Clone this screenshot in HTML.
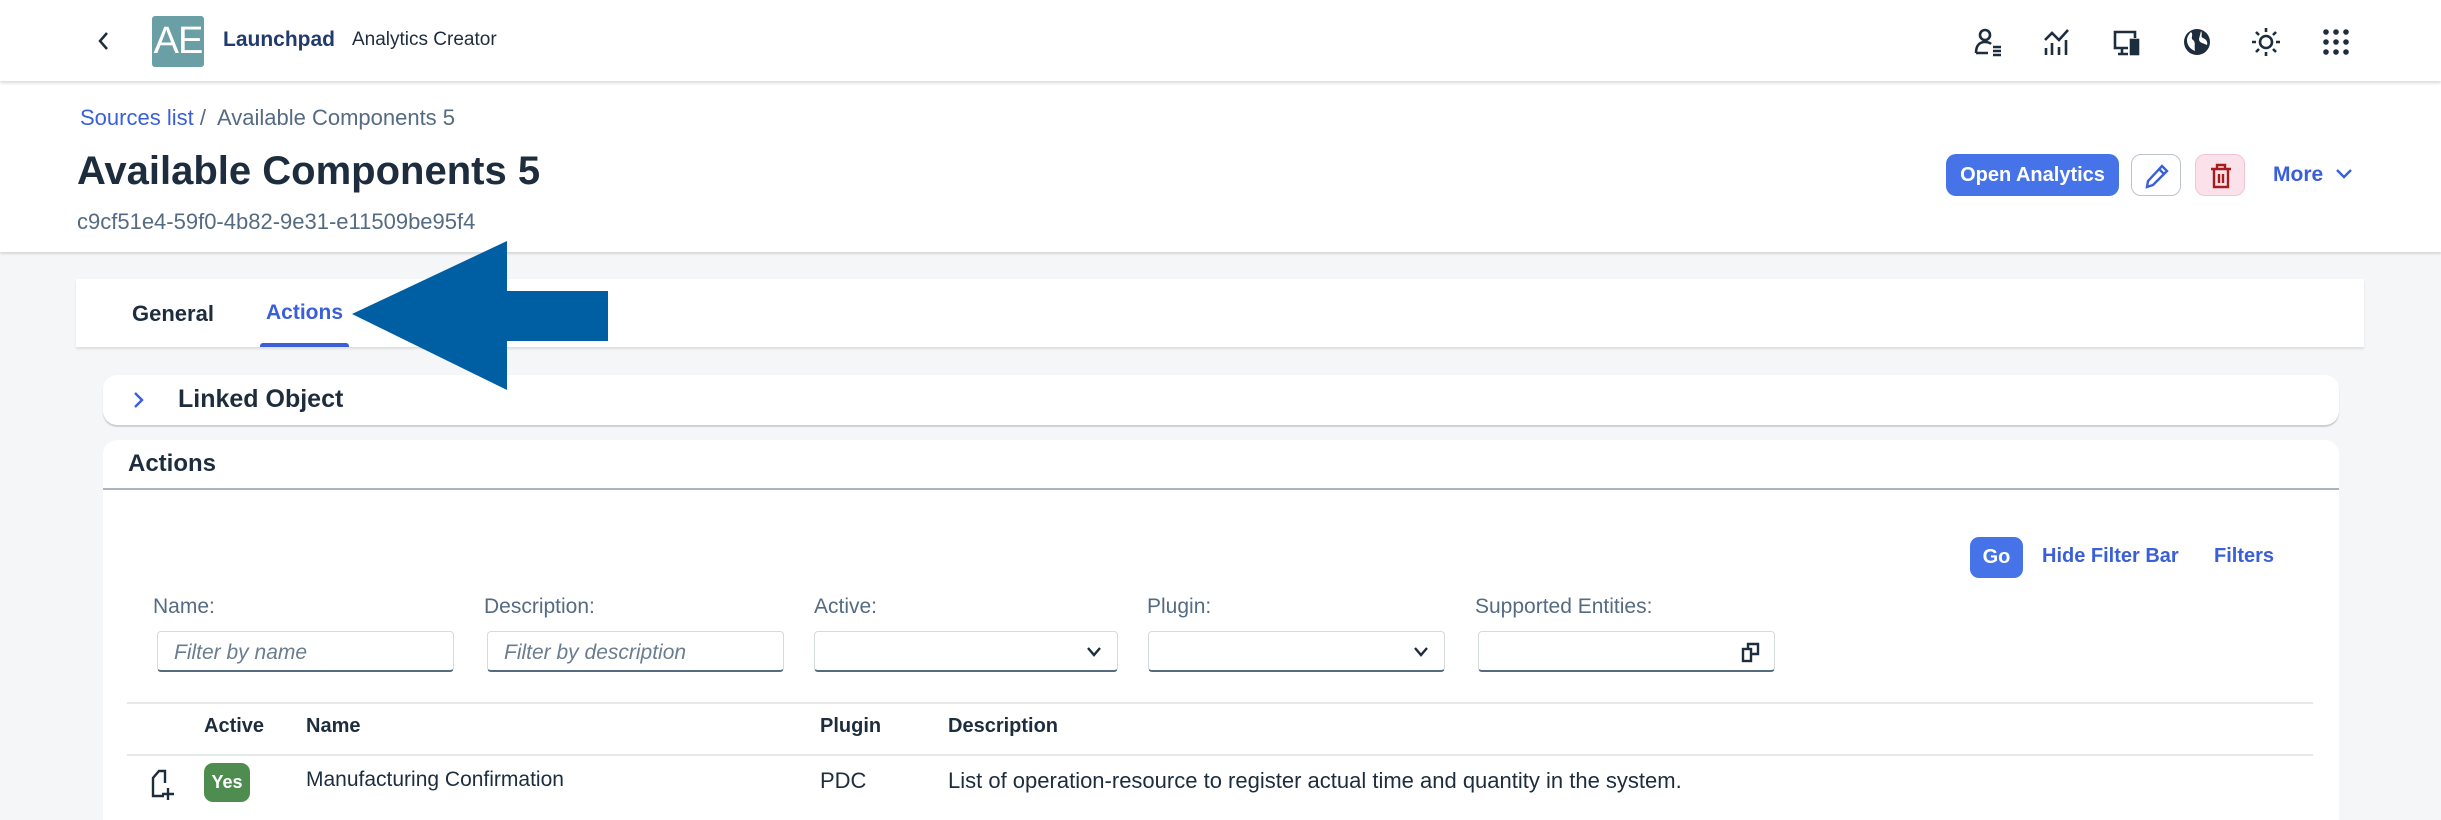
<!DOCTYPE html>
<html><head><meta charset="utf-8"><style>
*{margin:0;padding:0;box-sizing:border-box}
body{width:2441px;height:802px;overflow:hidden;background:#f5f6f7;font-family:"Liberation Sans",sans-serif;color:#1d2d3e;position:relative}
.a{position:absolute;white-space:nowrap}
.hdr{left:0;top:0;width:2441px;height:81px;background:#fff;box-shadow:0 2px 3px rgba(0,0,0,.15);z-index:2}
.ph{left:0;top:81px;width:2441px;height:171px;background:#fff;box-shadow:0 2px 2px rgba(0,0,0,.12);z-index:1}
.lbl{font-size:21px;color:#556b82;top:595px}
.inp{top:631px;height:41px;border:1px solid #d5dadd;border-bottom:2px solid #556b82;border-radius:4px;background:#fff}
.ph2{font-size:21px;font-style:italic;color:#6a7d90;top:9px;left:16px}
.th{top:715px;font-size:20px;font-weight:bold;color:#1d2d3e}
.td{top:768px;font-size:22px;color:#1d2d3e}
.lnk{color:#3a5fd8}
</style></head><body>
<div class="a hdr">
  <svg class="a" style="left:96px;top:30px" width="16" height="22" viewBox="0 0 16 22"><path d="M11 3 L4 11 L11 19" fill="none" stroke="#1d2d3e" stroke-width="2.5"/></svg>
  <div class="a" style="left:152px;top:16px;width:52px;height:51px;background:#6a9fa5;border-radius:3px;color:#fff;font-size:38px;text-align:center;line-height:51px;letter-spacing:-1px">AE</div>
  <div class="a" style="left:223px;top:28px;font-size:21px;font-weight:bold;color:#223a6e">Launchpad</div>
  <div class="a" style="left:352px;top:29px;font-size:19px;color:#1d2d3e">Analytics Creator</div>
  <svg class="a" style="left:1972px;top:26px" width="32" height="32" viewBox="0 0 32 32" fill="none" stroke="#1d2d3e" stroke-width="2.6"><circle cx="13" cy="9" r="5"/><path d="M4 27 C4 19 8 16 13 16 C16 16 18 17 19 18 M4 27 H16"/><path d="M21 21h8M21 25h8M21 29h8" stroke-width="2.4"/></svg>
  <svg class="a" style="left:2041px;top:26px" width="32" height="32" viewBox="0 0 32 32" fill="none" stroke="#1d2d3e" stroke-width="2.6"><path d="M4 14 L11 7 L18 14 L27 4"/><path d="M5 22v7M11 17v12M18 21v8M25 14v15"/></svg>
  <svg class="a" style="left:2111px;top:26px" width="32" height="32" viewBox="0 0 32 32" fill="none" stroke="#1d2d3e" stroke-width="2.6"><path d="M17 22H4V6h20v6"/><path d="M11 22v5M7 28h10"/><rect x="20" y="14" width="7" height="14" fill="#1d2d3e"/></svg>
  <svg class="a" style="left:2181px;top:26px" width="32" height="32" viewBox="0 0 32 32"><circle cx="16" cy="16" r="13" fill="#1d2d3e"/><path d="M10 6 C13 9 9 12 12 14 C15 16 13 20 14 25 C9 23 6 19 6 14 C6 11 8 8 10 6Z M20 5 C22 8 19 11 22 12 C25 13 27 16 26 19 C22 17 18 17 18 13 Z" fill="#fff"/></svg>
  <svg class="a" style="left:2250px;top:26px" width="32" height="32" viewBox="0 0 32 32" fill="none" stroke="#1d2d3e" stroke-width="2.6"><circle cx="16" cy="16" r="6"/><path d="M16 2v4M16 26v4M2 16h4M26 16h4M6 6l3 3M23 23l3 3M6 26l3-3M23 9l3-3"/></svg>
  <svg class="a" style="left:2320px;top:26px" width="32" height="32" viewBox="0 0 32 32" fill="#1d2d3e"><circle cx="6" cy="6" r="2.8"/><circle cx="16" cy="6" r="2.8"/><circle cx="26" cy="6" r="2.8"/><circle cx="6" cy="16" r="2.8"/><circle cx="16" cy="16" r="2.8"/><circle cx="26" cy="16" r="2.8"/><circle cx="6" cy="26" r="2.8"/><circle cx="16" cy="26" r="2.8"/><circle cx="26" cy="26" r="2.8"/></svg>
</div>
<div class="a ph">
  <div class="a" style="left:80px;top:24px;font-size:22px;color:#556b82"><span class="lnk">Sources list</span> /&nbsp; Available Components 5</div>
  <div class="a" style="left:77px;top:68px;font-size:40px;font-weight:bold;color:#1d2d3e">Available Components 5</div>
  <div class="a" style="left:77px;top:128px;font-size:22px;color:#556b82">c9cf51e4-59f0-4b82-9e31-e11509be95f4</div>
  <div class="a" style="left:1946px;top:73px;width:173px;height:42px;background:#4674e8;border-radius:10px;color:#fff;font-size:20px;font-weight:bold;text-align:center;line-height:42px">Open Analytics</div>
  <div class="a" style="left:2131px;top:73px;width:50px;height:42px;border:1px solid #bcc3ca;border-radius:10px;background:#fff">
    <svg class="a" style="left:12px;top:8px" width="26" height="26" viewBox="0 0 26 26" fill="none" stroke="#3a5fd8" stroke-width="2.4"><path d="M18 3 L23 8 L9 22 L3 24 L4 18 Z M15 6 L20 11"/></svg></div>
  <div class="a" style="left:2195px;top:73px;width:50px;height:42px;border:1px solid #f3c4d4;border-radius:10px;background:#fbe1ea">
    <svg class="a" style="left:12px;top:7px" width="26" height="28" viewBox="0 0 26 28" fill="none" stroke="#a51c1c" stroke-width="2.4"><path d="M3 7h20M9 7V3h8v4M6 7v18h14V7M11 12v9M15 12v9"/></svg></div>
  <div class="a lnk" style="left:2273px;top:82px;font-size:21px;font-weight:bold">More</div>
  <svg class="a" style="left:2335px;top:86px" width="18" height="14" viewBox="0 0 18 14"><path d="M2 3 L9 10 L16 3" fill="none" stroke="#3a5fd8" stroke-width="2.4"/></svg>
</div>
<div class="a" style="left:76px;top:279px;width:2288px;height:68px;background:#fff;box-shadow:0 2px 2px rgba(0,0,0,.1)">
  <div class="a" style="left:56px;top:22px;font-size:22px;font-weight:bold">General</div>
  <div class="a lnk" style="left:190px;top:22px;font-size:21px;font-weight:bold">Actions</div>
  <div class="a" style="left:184px;top:64px;width:89px;height:4px;background:#3a5fd8;border-radius:3px 3px 0 0"></div>
</div>
<svg class="a" style="left:0;top:0;z-index:3" width="700" height="420"><polygon points="352,314 507,241 507,291 608,291 608,341 507,341 507,390" fill="#005ea3"/></svg>
<div class="a" style="left:103px;top:375px;width:2236px;height:50px;background:#fff;border-radius:14px;box-shadow:0 2px 1px #c9cfd5">
  <svg class="a" style="left:28px;top:16px" width="14" height="18" viewBox="0 0 14 18"><path d="M4 2 L11 9 L4 16" fill="none" stroke="#3a5fd8" stroke-width="2.4"/></svg>
  <div class="a" style="left:75px;top:10px;font-size:25px;font-weight:bold">Linked Object</div>
</div>
<div class="a" style="left:103px;top:440px;width:2236px;height:380px;background:#fff;border-radius:14px 14px 0 0">
  <div class="a" style="left:25px;top:10px;font-size:24px;font-weight:bold">Actions</div>
  <div class="a" style="left:0;top:48px;width:2236px;height:2px;background:#a9b4be"></div>
</div>
<div class="a" style="left:1970px;top:537px;width:53px;height:41px;background:#4674e8;border-radius:9px;color:#fff;font-size:20px;font-weight:bold;text-align:center;line-height:41px">Go</div>
<div class="a lnk" style="left:2042px;top:545px;font-size:20px;font-weight:bold">Hide Filter Bar</div>
<div class="a lnk" style="left:2214px;top:545px;font-size:20px;font-weight:bold">Filters</div>
<div class="a lbl" style="left:153px">Name:</div>
<div class="a lbl" style="left:484px">Description:</div>
<div class="a lbl" style="left:814px">Active:</div>
<div class="a lbl" style="left:1147px">Plugin:</div>
<div class="a lbl" style="left:1475px">Supported Entities:</div>
<div class="a inp" style="left:157px;width:297px"><div class="a ph2">Filter by name</div></div>
<div class="a inp" style="left:487px;width:297px"><div class="a ph2">Filter by description</div></div>
<div class="a inp" style="left:814px;width:304px"><svg class="a" style="right:14px;top:13px" width="18" height="14" viewBox="0 0 18 14"><path d="M3 3 L9 10 L15 3" fill="none" stroke="#1d2d3e" stroke-width="2.4"/></svg></div>
<div class="a inp" style="left:1148px;width:297px"><svg class="a" style="right:14px;top:13px" width="18" height="14" viewBox="0 0 18 14"><path d="M3 3 L9 10 L15 3" fill="none" stroke="#1d2d3e" stroke-width="2.4"/></svg></div>
<div class="a inp" style="left:1478px;width:297px"><svg class="a" style="right:12px;top:8px" width="22" height="24" viewBox="0 0 22 24" fill="none" stroke="#1d2d3e" stroke-width="2.4"><rect x="3" y="9" width="8" height="12"/><path d="M8 9V4h10v10h-7"/></svg></div>
<div class="a" style="left:127px;top:702px;width:2186px;height:2px;background:#e5e8eb"></div>
<div class="a th" style="left:204px">Active</div>
<div class="a th" style="left:306px">Name</div>
<div class="a th" style="left:820px">Plugin</div>
<div class="a th" style="left:948px">Description</div>
<div class="a" style="left:127px;top:754px;width:2186px;height:2px;background:#e5e8eb"></div>
<svg class="a" style="left:150px;top:768px" width="26" height="34" viewBox="0 0 26 34" fill="none" stroke="#1d2d3e" stroke-width="2.4"><path d="M14 28H3V10L9 3h6v12M18 20v12M12 26h12"/></svg>
<div class="a" style="left:204px;top:763px;width:46px;height:39px;background:#4f8c4f;border-radius:9px;color:#fff;font-size:18px;font-weight:bold;text-align:center;line-height:39px">Yes</div>
<div class="a td" style="left:306px;font-size:21px">Manufacturing Confirmation</div>
<div class="a td" style="left:820px">PDC</div>
<div class="a td" style="left:948px">List of operation-resource to register actual time and quantity in the system.</div>
</body></html>
